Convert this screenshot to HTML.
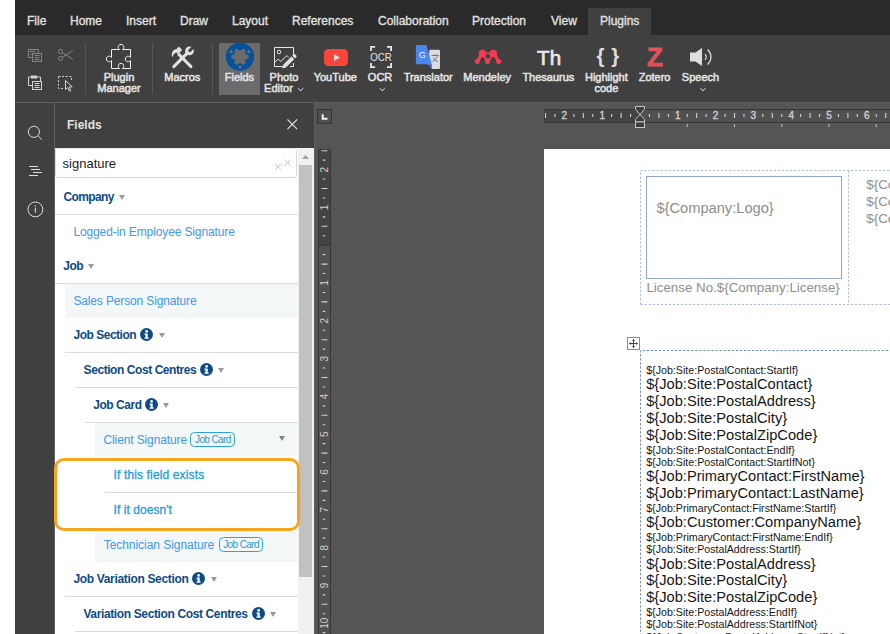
<!DOCTYPE html>
<html lang="en">
<head>
<meta charset="utf-8">
<title>Fields</title>
<style>
*{box-sizing:border-box;margin:0;padding:0}
html,body{width:890px;height:634px;overflow:hidden;background:#fff}
body{position:relative;font-family:"Liberation Sans",Arial,sans-serif;font-size:11px;color:#d9d9d9}
.abs{position:absolute}
#app{position:absolute;left:15px;top:0;width:875px;height:634px;background:#404040;overflow:hidden}
/* tab bar */
#tabs{position:absolute;left:0;top:0;width:875px;height:35px;background:#2a2a2a}
.tab{position:absolute;top:8px;height:27px;line-height:27px;font-size:12px;color:#e0e0e0;white-space:nowrap;-webkit-text-stroke:.35px #e0e0e0}
.tab.on{background:#404040;padding:0 12px}
/* toolbar */
#tb{position:absolute;left:0;top:35px;width:875px;height:67px;background:#404040}
#tbline{position:absolute;left:0;top:102px;width:875px;height:1px;background:#5e5e5e}
.sep{position:absolute;top:8px;width:1px;height:51px;background:#555}
.big{position:absolute;top:8px;height:51px;text-align:center;font-size:11px;line-height:11px;color:#dcdcdc;white-space:nowrap}
.big .lbl{position:absolute;left:50%;transform:translateX(-50%);top:28px;text-align:center}
.big svg{position:absolute;left:50%;transform:translateX(-50%);top:0}
.pressed{background:#6b6b6b}
.lbl{position:absolute;top:37px;width:0;font-size:11px;line-height:10.5px;color:#e4e4e4;white-space:nowrap;text-align:center;-webkit-text-stroke:.5px #e4e4e4}
.lbl span{position:absolute;left:0;top:0;transform:translateX(-50%);display:block;text-align:center}
.chev{display:inline-block;width:5px;height:5px;border-right:1px solid #dcdcdc;border-bottom:1px solid #dcdcdc;transform:rotate(45deg) scale(.8);margin:0 1px 0px 2px;position:relative;top:-1px;vertical-align:baseline}

/* left */
#side{position:absolute;left:0;top:103px;width:39px;height:531px;background:#404040}
#sideline{position:absolute;left:39px;top:103px;width:1px;height:531px;background:#5e5e5e}
#phead{position:absolute;left:40px;top:103px;width:259px;height:45px;background:#404040}
#phead .t{position:absolute;left:12px;top:15px;font-weight:bold;font-size:12px;line-height:14px;color:#e3e3e3}
#panel{position:absolute;left:40px;top:148px;width:259px;height:486px;background:#fff;overflow:hidden;font-family:"Liberation Sans",Arial,sans-serif}

#panel .bg{position:absolute;width:300px;background:#f4f7f7}
#panel .ln{position:absolute;width:300px;height:1px;background:#dcdcdc}
#panel .tx{position:absolute;white-space:nowrap;font-size:12px;line-height:15px;height:15px}
#panel .g{font-weight:bold;color:#0d4a86}
#panel .f{color:#4198ee}
#panel .c{color:#1f9bdc;-webkit-text-stroke:.3px #1f9bdc}
#panel .car{position:absolute;width:0;height:0;border-left:3px solid transparent;border-right:3px solid transparent;border-top:5px solid #9a9a9a}
#panel .inf{position:absolute;width:13.200px;height:13.200px;border-radius:50%;background:#0d4a86}
#panel .inf svg{position:absolute;left:0;top:0}
#panel .bdg{position:absolute;white-space:nowrap;height:14.600px;border:1px solid #2aa3e0;border-radius:4.500px;color:#2a9bd6;font-size:10px;line-height:14.600px;padding:0 3.400px 0 3.700px;letter-spacing:-.6px}
/* editor */
#page{position:absolute;left:230px;top:46px;width:346px;height:485px;background:#fff;overflow:hidden;color:#111}
#page .gt{color:#8e8e8e;white-space:nowrap}
#page .dl{position:absolute;left:102.200px;white-space:nowrap;color:#161616}
#page .dl.s{font-size:10.670px;line-height:12.270px}
#page .dl.L{font-size:14.670px;line-height:16.870px}
#ed{position:absolute;left:299px;top:103px;width:576px;height:531px;background:#555}
</style>
</head>
<body>
<div id="app">
  <div id="tabs">
    <div class="tab" style="left:12px">File</div>
    <div class="tab" style="left:55px">Home</div>
    <div class="tab" style="left:111px">Insert</div>
    <div class="tab" style="left:165px">Draw</div>
    <div class="tab" style="left:217px">Layout</div>
    <div class="tab" style="left:277px">References</div>
    <div class="tab" style="left:363px">Collaboration</div>
    <div class="tab" style="left:457px">Protection</div>
    <div class="tab" style="left:536px">View</div>
    <div class="tab on" style="left:573px">Plugins</div>
  </div>
  <div id="tb">
    <div class="sep" style="left:70px"></div>
    <div class="sep" style="left:137px"></div>
    <div class="sep" style="left:197px"></div>
    <div class="pressed abs" style="left:204px;top:8px;width:41px;height:52px"></div>
    <svg class="abs" style="left:0;top:0" width="875" height="67" viewBox="15 35 875 67" fill="none">
      <!-- copy (disabled) -->
      <g stroke="#858585" stroke-width="1">
        <path d="M32.5 57.5h-4v-8h10v4"/><path d="M30 51.5h5M30 54h1.5"/>
        <rect x="32.5" y="53.5" width="9" height="8"/><path d="M34.5 55.5h5M34.5 57.5h5M34.5 59.5h5"/>
      </g>
      <!-- cut (disabled) -->
      <g stroke="#858585" stroke-width="1">
        <circle cx="60.5" cy="51.5" r="2"/><circle cx="60.5" cy="58.5" r="2"/>
        <path d="M62.3 52.6L73 59.5M62.3 57.4L73 50.5"/>
      </g>
      <!-- paste -->
      <g stroke="#d4d4d4" stroke-width="1">
        <path d="M32.5 85.5h-4v-8.500h3M37 77h3.500v4"/><rect x="31.500" y="76" width="5" height="2" fill="#d4d4d4"/>
        <rect x="32.500" y="81.500" width="9" height="8"/><path d="M34.500 83.500h5M34.500 85.500h5M34.500 87.500h5"/>
      </g>
      <!-- select -->
      <g stroke="#d4d4d4" stroke-width="1">
        <path d="M58.500 76.500h13v4M58.500 76.500v12h5" stroke-dasharray="2 1.600"/>
        <path d="M65.500 80.500v9l2.200-2 1.600 3.700 1.500-.7-1.600-3.600h3z" fill="#404040"/>
      </g>
      <!-- plugin manager -->
      <g stroke="#f0f0f0" stroke-width="1" fill="none">
        <path d="M111.500 49.500h8a2.800 2.800 0 1 1 3 0h8v8a2.800 2.800 0 1 0 0 3v8h-8a2.800 2.800 0 1 0 -3 0h-8v-8a2.800 2.800 0 1 1 0 -3z"/>
      </g>
      <!-- macros -->
      <g stroke="#e2e2e2" stroke-width="2.900" stroke-linecap="round" fill="none"><path d="M191 66.600L178.800 54.400M173.800 66.600L186.500 53.900"/></g>
      <path d="M178.900 46.600l3.300 3.300-4 4.200-1.700-1.700c-1.800 .4-3.200 2-4.200 4.800c-1.500-3.800 .3-7.700 4-8z" fill="#e2e2e2"/>
      <circle cx="189.500" cy="50.900" r="4.400" fill="#e2e2e2"/>
      <path d="M189.990 52.530L194.800 47.720L192.680 45.600L187.870 50.410z" fill="#404040"/>
      <path d="M186.500 53.900l-2 2" stroke="#e2e2e2" stroke-width="2.600" fill="none"/>
      <!-- fields -->
      <circle cx="240" cy="56.800" r="14.100" fill="#05519a"/>
      <path d="M248.90 56.80 L248.74 56.04 L248.25 55.34 L247.29 54.85 L246.31 54.50 L245.74 54.13 L245.37 53.70 L245.18 53.17 L245.15 52.48 L245.34 51.46 L245.39 50.38 L245.03 49.62 L244.45 49.09 L243.71 48.85 L242.87 48.92 L241.95 49.51 L241.17 50.18 L240.55 50.49 L240.00 50.60 L239.45 50.49 L238.83 50.18 L238.05 49.51 L237.13 48.92 L236.29 48.85 L235.55 49.09 L234.97 49.62 L234.61 50.38 L234.66 51.46 L234.85 52.48 L234.82 53.17 L234.63 53.70 L234.26 54.13 L233.69 54.50 L232.71 54.85 L231.75 55.34 L231.26 56.04 L231.10 56.80 L231.26 57.56 L231.75 58.26 L232.71 58.75 L233.69 59.10 L234.26 59.47 L234.63 59.90 L234.82 60.43 L234.85 61.12 L234.66 62.14 L234.61 63.22 L234.97 63.98 L235.55 64.51 L236.29 64.75 L237.13 64.68 L238.05 64.09 L238.83 63.42 L239.45 63.11 L240.00 63.00 L240.55 63.11 L241.17 63.42 L241.95 64.09 L242.87 64.68 L243.71 64.75 L244.45 64.51 L245.03 63.98 L245.39 63.22 L245.34 62.14 L245.15 61.12 L245.18 60.43 L245.37 59.90 L245.74 59.47 L246.31 59.10 L247.29 58.75 L248.25 58.26 L248.74 57.56Z" fill="#6b6b6b"/>
      <circle cx="248.92" cy="51.65" r="1.5" fill="#70767c"/><circle cx="231.08" cy="51.65" r="1.5" fill="#70767c"/><circle cx="240.00" cy="67.10" r="1.5" fill="#70767c"/>
      <!-- photo editor -->
      <g stroke="#e6e6e6" stroke-width="1" fill="none">
        <path d="M283 66.500h-8.500v-19h19v8.500M293.500 63v3.500h-3.500"/>
        <circle cx="279" cy="52" r="1.800"/>
        <path d="M274.500 62.600l3.600-3.600 2.700 2.500 6-6 2 2"/>
      </g>
      <path d="M282.300 68.400l.9-3.600 8.300-8.300 2.700 2.700-8.300 8.300zM292.300 55.700l1.300-1.300a1.200 1.200 0 0 1 1.700 0l1 1a1.200 1.200 0 0 1 0 1.700l-1.300 1.300z" fill="#e0e0e0"/>
      <!-- youtube -->
      <rect x="324" y="49" width="24" height="17" rx="4.500" fill="#f9453a"/>
      <path d="M334 54.200v6.800l6.100-3.400z" fill="#d6dde0"/>
      <!-- ocr -->
      <g stroke="#e6e6e6" stroke-width="1.800" fill="none">
        <path d="M371 51v-4.100h4.100M387 46.900h4.100v4.100M391.100 63v4.100h-4.100M375.100 67.100h-4.100v-4.100"/>
      </g>
      <text x="381" y="60.600" text-anchor="middle" font-family="Liberation Sans, Arial, sans-serif" font-size="10" fill="#e6e6e6" textLength="21.500" lengthAdjust="spacingAndGlyphs">OCR</text>
      <!-- translator -->
      <path d="M429.500 49.700h9.300a1.200 1.200 0 0 1 1.200 1.200v16.900a1.200 1.200 0 0 1 -1.200 1.200h-6.800l-4-4.700z" fill="#dcdcdc"/>
      <path d="M427.900 64.300h3.900l-.3 4.700z" fill="#3b5bbd"/>
      <path d="M417.100 45.100h9.400l5.300 19.200h-14.700a1.200 1.200 0 0 1 -1.200-1.200v-16.800a1.200 1.200 0 0 1 1.200-1.200z" fill="#4a86ee"/>
      <text x="422.300" y="58" text-anchor="middle" font-family="Liberation Sans, Arial, sans-serif" font-size="9" fill="#f2f5fb">G</text>
      <g stroke="#55778f" stroke-width=".9" fill="none"><path d="M431.500 55.500h7.500M435.200 54v1.500M437.500 55.500c-.6 2.600-2.400 4.700-5 6M433 57.500c1 2 2.500 3.300 5 4.200"/></g>
      <!-- mendeley -->
      <g fill="#f33d4f">
        <circle cx="477.300" cy="61.300" r="2.600"/><circle cx="487.600" cy="61.300" r="2.600"/><circle cx="498.700" cy="61.300" r="2.600"/>
        <circle cx="482.500" cy="53.600" r="3.800"/><circle cx="493.300" cy="53.600" r="3.800"/>
        <circle cx="487.800" cy="56.400" r="3.900"/>
        <g stroke="#f33d4f" stroke-width="3.2" stroke-linecap="round" fill="none"><path d="M477.500 61l4.500-7M498.500 61l-4.500-7M487.700 61v-4"/></g>
      </g>
      <circle cx="487.800" cy="56.200" r="2.300" fill="#404040"/>
      <!-- speech -->
      <path d="M690 52.500h5.500l6.500-4.500v18l-6.500-4.500h-5.500z" fill="#dedede"/>
      <g stroke="#dedede" stroke-width="1.300" fill="none"><path d="M705 54.200a4 4 0 0 1 0 5.600"/><path d="M707.500 49.500a10 10 0 0 1 0 15"/></g>
    </svg>
    <div class="abs ticon" style="left:522px;top:10.500px;font-size:20.500px;line-height:23px;width:24px;letter-spacing:.3px;color:#e8e8e8;-webkit-text-stroke:.7px #e8e8e8">Th</div>
    <div class="abs ticon" style="left:581.500px;top:9px;font-size:20.500px;line-height:23px;font-weight:bold;color:#dcdcdc;word-spacing:1px">{ }</div>
    <div class="abs ticon" style="left:632px;top:7px;font-size:26px;line-height:30px;font-weight:bold;color:#e3525c;-webkit-text-stroke:.8px #e3525c">Z</div>
    <div class="lbl" style="left:104.0px"><span>Plugin<br>Manager</span></div>
    <div class="lbl" style="left:167.3px"><span>Macros</span></div>
    <div class="lbl" style="left:224.4px"><span>Fields</span></div>
    <div class="lbl" style="left:269.0px"><span>Photo<br>Editor <i class="chev"></i></span></div>
    <div class="lbl" style="left:320.3px"><span>YouTube</span></div>
    <div class="lbl" style="left:365.1px"><span>OCR<br><i class="chev" style="margin-left:5px"></i></span></div>
    <div class="lbl" style="left:413.2px"><span>Translator</span></div>
    <div class="lbl" style="left:472.2px"><span>Mendeley</span></div>
    <div class="lbl" style="left:533.4px"><span>Thesaurus</span></div>
    <div class="lbl" style="left:591.4px"><span>Highlight<br>code</span></div>
    <div class="lbl" style="left:639.6px"><span>Zotero</span></div>
    <div class="lbl" style="left:685.5px"><span>Speech<br><i class="chev" style="margin-left:5px"></i></span></div>
  </div>
  <div id="tbline"></div>
  <div id="side">
    <svg class="abs" style="left:0;top:0" width="39" height="531" viewBox="15 103 39 531" fill="none" stroke="#dcdcdc" stroke-width="1">
      <circle cx="33.900" cy="131.800" r="5.600"/><path d="M38 135.800l4 4"/>
      <path d="M29 166.500h9M31 169.500h9M33 172.500h9M29 175.500h9"/>
      <circle cx="35.400" cy="209.400" r="7.400"/><path d="M35.400 207.800v4.800" stroke-width="1.100"/><circle cx="35.400" cy="206" r=".7" fill="#dcdcdc" stroke="none"/>
    </svg>
  </div>
  <div id="sideline"></div>
  <div id="phead"><div class="t">Fields</div><svg class="abs" style="left:231px;top:15px" width="13" height="13" viewBox="0 0 13 13" stroke="#e2e2e2" stroke-width="1.100" fill="none"><path d="M1.500 1.500l9.600 9.600M11.100 1.500l-9.600 9.600"/></svg></div>
  <div id="panel">
    <div class="abs" style="left:0;top:0;width:242px;height:30px;border:1px solid #d9d9d9;border-top-color:#e8e8e8;border-radius:3px;background:#fff"></div>
    <div class="abs" style="left:7.600px;top:7px;font-size:13px;line-height:18px;color:#1c1c1c">signature</div>
    <svg class="abs" style="left:218px;top:8px" width="22" height="16" viewBox="273 156 22 16" stroke="#b9c3d3" stroke-width="1" fill="none"><path d="M275 163.700l6 6M281 163.700l-6 6M284.600 159.500l6 6M290.600 159.500l-6 6"/></svg>
    <div class="abs" style="left:243px;top:0;width:16px;height:486px;background:#f1f1f1;z-index:2"></div>
    <div class="abs" style="left:244.300px;top:17px;width:12.700px;height:412px;background:#c1c1c1;z-index:3"></div>
    <svg class="abs" style="left:243px;top:0;z-index:3" width="15" height="17" viewBox="0 0 15 17"><path d="M4 11l3.500-4 3.500 4z" fill="#a3a3a3"/></svg>
    <!--ROWS-->
    <div class="ln" style="left:0px;top:66px"></div>
    <span class="tx g" style="left:8.5px;top:42px;letter-spacing:-0.641px">Company</span>
    <i class="car" style="left:64.1px;top:47.2px"></i>
    <span class="tx f" style="left:18.4px;top:77px;letter-spacing:-0.124px">Logged-in Employee Signature</span>
    <div class="ln" style="left:0px;top:135px"></div>
    <span class="tx g" style="left:8.2px;top:111px;letter-spacing:-0.448px">Job</span>
    <i class="car" style="left:33.0px;top:116.2px"></i>
    <div class="bg" style="left:10px;top:136px;height:33.5px"></div>
    <span class="tx f" style="left:18.4px;top:146px;letter-spacing:-0.135px">Sales Person Signature</span>
    <div class="ln" style="left:10px;top:204px"></div>
    <span class="tx g" style="left:18.6px;top:180px;letter-spacing:-0.501px">Job Section</span>
    <i class="inf" style="left:85.2px;top:179.9px"><svg width="13.2" height="13.2" viewBox="0 0 13.2 13.2"><circle cx="6.6" cy="3.400" r="1.350" fill="#fff"/><path d="M4.600 5.500h3.100v3.900h1v1.400h-4.200v-1.400h1v-2.500h-.9z" fill="#fff"/></svg></i>
    <i class="car" style="left:103.7px;top:185.2px"></i>
    <div class="ln" style="left:20px;top:239px"></div>
    <span class="tx g" style="left:28.6px;top:215px;letter-spacing:-0.433px">Section Cost Centres</span>
    <i class="inf" style="left:145.3px;top:214.9px"><svg width="13.2" height="13.2" viewBox="0 0 13.2 13.2"><circle cx="6.6" cy="3.400" r="1.350" fill="#fff"/><path d="M4.600 5.500h3.100v3.900h1v1.400h-4.200v-1.400h1v-2.500h-.9z" fill="#fff"/></svg></i>
    <i class="car" style="left:163.3px;top:220.2px"></i>
    <div class="ln" style="left:30px;top:274px"></div>
    <span class="tx g" style="left:38.3px;top:250px;letter-spacing:-0.477px">Job Card</span>
    <i class="inf" style="left:90.1px;top:249.9px"><svg width="13.2" height="13.2" viewBox="0 0 13.2 13.2"><circle cx="6.6" cy="3.400" r="1.350" fill="#fff"/><path d="M4.600 5.500h3.100v3.900h1v1.400h-4.200v-1.400h1v-2.500h-.9z" fill="#fff"/></svg></i>
    <i class="car" style="left:108.1px;top:255.2px"></i>
    <div class="bg" style="left:40px;top:275px;height:33px"></div>
    <span class="tx f" style="left:48.5px;top:285px;letter-spacing:-0.118px">Client Signature</span>
    <span class="bdg" style="left:135.3px;top:284.4px">Job Card</span>
    <i class="car" style="left:223.8px;top:290.2px;top:288.4px;border-top-color:#858585"></i>
    <div class="ln" style="left:50px;top:344px"></div>
    <span class="tx c" style="left:58.5px;top:320px;letter-spacing:0.138px">If this field exists</span>
    <span class="tx c" style="left:58.5px;top:355px;letter-spacing:0.065px">If it doesn't</span>
    <div class="bg" style="left:40px;top:380px;height:33.5px"></div>
    <span class="tx f" style="left:48.7px;top:390px;letter-spacing:-0.045px">Technician Signature</span>
    <span class="bdg" style="left:163.5px;top:389.4px">Job Card</span>
    <div class="ln" style="left:10px;top:448px"></div>
    <span class="tx g" style="left:18.4px;top:424px;letter-spacing:-0.335px">Job Variation Section</span>
    <i class="inf" style="left:137.2px;top:423.9px"><svg width="13.2" height="13.2" viewBox="0 0 13.2 13.2"><circle cx="6.6" cy="3.400" r="1.350" fill="#fff"/><path d="M4.600 5.500h3.100v3.900h1v1.400h-4.200v-1.400h1v-2.500h-.9z" fill="#fff"/></svg></i>
    <i class="car" style="left:155.6px;top:429.2px"></i>
    <div class="ln" style="left:20px;top:483px"></div>
    <span class="tx g" style="left:28.4px;top:459px;letter-spacing:-0.37px">Variation Section Cost Centres</span>
    <i class="inf" style="left:196.7px;top:458.9px"><svg width="13.2" height="13.2" viewBox="0 0 13.2 13.2"><circle cx="6.6" cy="3.400" r="1.350" fill="#fff"/><path d="M4.600 5.500h3.100v3.900h1v1.400h-4.200v-1.400h1v-2.500h-.9z" fill="#fff"/></svg></i>
    <i class="car" style="left:214.8px;top:464.2px"></i>
    <!--/ROWS-->
  </div>
  <div class="abs" style="left:38.800px;top:458px;width:246.300px;height:73px;border:3px solid #f5a51c;border-radius:10px;z-index:5"></div>
  <div id="ed">
    <svg class="abs" style="left:0;top:0" width="576" height="531" viewBox="314 103 576 531" font-family="Liberation Sans, Arial, sans-serif">
    <rect x="314" y="103" width="1" height="531" fill="#5e5e5e"/>
    <rect x="317.500" y="109.500" width="14" height="14" fill="#4e4e4e" stroke="#353535"/>
    <path d="M322.700 114.300v4.400h4.800" stroke="#f2f2f2" stroke-width="2" fill="none"/>
    <rect x="544.500" y="109.500" width="360" height="13" fill="#515151" stroke="#363636"/>
    <rect x="545" y="110" width="95" height="12" fill="#444"/>
    <text x="564.40" y="119.200" text-anchor="middle" font-size="10" fill="#d0d0d0" stroke="#d0d0d0" stroke-width=".35">2</text>
    <text x="602.20" y="119.200" text-anchor="middle" font-size="10" fill="#d0d0d0" stroke="#d0d0d0" stroke-width=".35">1</text>
    <text x="677.80" y="119.200" text-anchor="middle" font-size="10" fill="#d0d0d0" stroke="#d0d0d0" stroke-width=".35">1</text>
    <text x="715.60" y="119.200" text-anchor="middle" font-size="10" fill="#d0d0d0" stroke="#d0d0d0" stroke-width=".35">2</text>
    <text x="753.40" y="119.200" text-anchor="middle" font-size="10" fill="#d0d0d0" stroke="#d0d0d0" stroke-width=".35">3</text>
    <text x="791.20" y="119.200" text-anchor="middle" font-size="10" fill="#d0d0d0" stroke="#d0d0d0" stroke-width=".35">4</text>
    <text x="829.00" y="119.200" text-anchor="middle" font-size="10" fill="#d0d0d0" stroke="#d0d0d0" stroke-width=".35">5</text>
    <text x="866.80" y="119.200" text-anchor="middle" font-size="10" fill="#d0d0d0" stroke="#d0d0d0" stroke-width=".35">6</text>
    <path d="M545.50 113v5M554.95 114v3M573.85 114v3M583.30 113v5M592.75 114v3M611.65 114v3M621.10 113v5M630.55 114v3M649.45 114v3M658.90 113v5M668.35 114v3M687.25 114v3M696.70 113v5M706.15 114v3M725.05 114v3M734.50 113v5M743.95 114v3M762.85 114v3M772.30 113v5M781.75 114v3M800.65 114v3M810.10 113v5M819.55 114v3M838.45 114v3M847.90 113v5M857.35 114v3M876.25 114v3M885.70 113v5" stroke="#d2d2d2" stroke-width="1.100"/>
    <path d="M687.25 124v3M734.50 124v3M781.75 124v3M829.00 124v3M876.25 124v3" stroke="#c4c4c4" stroke-width="1"/>
    <path d="M635.500 106.500h9v2.500l-4.500 5.600l-4.500-5.600z" fill="#3c3c3c" stroke="#c6c6c6"/>
    <path d="M635.500 122v-2.600l4.500-4.800l4.500 4.800v2.600z" fill="#3c3c3c" stroke="#c6c6c6"/>
    <rect x="635.500" y="122" width="9" height="5.500" fill="#3c3c3c" stroke="#c6c6c6"/>
    <rect x="318.500" y="149.500" width="12" height="500" fill="#515151" stroke="#363636"/>
    <rect x="319" y="150" width="11" height="95.2" fill="#444"/>
    <rect x="319" y="244.7" width="11" height="1" fill="#363636"/>
    <text transform="translate(328.300 169.60) rotate(-90)" text-anchor="middle" font-size="10" fill="#d0d0d0">2</text>
    <text transform="translate(328.300 207.40) rotate(-90)" text-anchor="middle" font-size="10" fill="#d0d0d0">1</text>
    <text transform="translate(328.300 283.00) rotate(-90)" text-anchor="middle" font-size="10" fill="#d0d0d0">1</text>
    <text transform="translate(328.300 320.80) rotate(-90)" text-anchor="middle" font-size="10" fill="#d0d0d0">2</text>
    <text transform="translate(328.300 358.60) rotate(-90)" text-anchor="middle" font-size="10" fill="#d0d0d0">3</text>
    <text transform="translate(328.300 396.40) rotate(-90)" text-anchor="middle" font-size="10" fill="#d0d0d0">4</text>
    <text transform="translate(328.300 434.20) rotate(-90)" text-anchor="middle" font-size="10" fill="#d0d0d0">5</text>
    <text transform="translate(328.300 472.00) rotate(-90)" text-anchor="middle" font-size="10" fill="#d0d0d0">6</text>
    <text transform="translate(328.300 509.80) rotate(-90)" text-anchor="middle" font-size="10" fill="#d0d0d0">7</text>
    <text transform="translate(328.300 547.60) rotate(-90)" text-anchor="middle" font-size="10" fill="#d0d0d0">8</text>
    <text transform="translate(328.300 585.40) rotate(-90)" text-anchor="middle" font-size="10" fill="#d0d0d0">9</text>
    <text transform="translate(328.300 623.20) rotate(-90)" text-anchor="middle" font-size="10" fill="#d0d0d0">10</text>
    <path d="M321.500 150.70h6M322.700 160.15h2.600M322.700 179.05h2.600M321.500 188.50h6M322.700 197.95h2.600M322.700 216.85h2.600M321.500 226.30h6M322.700 235.75h2.600M322.700 254.65h2.600M321.500 264.10h6M322.700 273.55h2.600M322.700 292.45h2.600M321.500 301.90h6M322.700 311.35h2.600M322.700 330.25h2.600M321.500 339.70h6M322.700 349.15h2.600M322.700 368.05h2.600M321.500 377.50h6M322.700 386.95h2.600M322.700 405.85h2.600M321.500 415.30h6M322.700 424.75h2.600M322.700 443.65h2.600M321.500 453.10h6M322.700 462.55h2.600M322.700 481.45h2.600M321.500 490.90h6M322.700 500.35h2.600M322.700 519.25h2.600M321.500 528.70h6M322.700 538.15h2.600M322.700 557.05h2.600M321.500 566.50h6M322.700 575.95h2.600M322.700 594.85h2.600M321.500 604.30h6M322.700 613.75h2.600M322.700 632.65h2.600" stroke="#d2d2d2" stroke-width="1.100"/>
    </svg>
    <div id="page">
      <svg class="abs" style="left:0;top:0" width="346" height="485" viewBox="544 149 346 485" fill="none">
        <path d="M640.500 304.500v-134h260M640.500 304.500h260M848.500 170.500v134" stroke="#adbedb" stroke-width="1" stroke-dasharray="2.300 1.750"/>
        <rect x="646.500" y="176.500" width="195" height="102" stroke="#93a6cb" stroke-width="1"/>
        <path d="M640.500 640v-289.500h260" stroke="#6f8fba" stroke-width="1" stroke-dasharray="2.300 1.750"/>
        <rect x="627.500" y="337.500" width="12" height="12" fill="#fff" stroke="#8c8c8c"/>
        <path d="M633.500 339.500v8M629.500 343.500h8" stroke="#444" stroke-width="1"/>
        <path d="M632 341l1.500-2 1.500 2zM632 346l1.500 2 1.500-2zM631 342l-2 1.500 2 1.500zM636 342l2 1.500-2 1.500z" fill="#444"/>
      </svg>
      <div class="abs gt" style="left:112.400px;top:51.400px;font-size:14.670px;line-height:17px">${Company:Logo}</div>
      <div class="abs gt" style="left:102.400px;top:131px;font-size:13.330px;line-height:15.300px">License No.${Company:License}</div>
      <div class="abs gt" style="left:322.300px;top:27.600px;font-size:13.330px;line-height:15.330px">${Company:Name}</div>
      <div class="abs gt" style="left:322.300px;top:44.700px;font-size:13.330px;line-height:15.330px">${Company:Address}</div>
      <div class="abs gt" style="left:322.300px;top:61.800px;font-size:13.330px;line-height:15.330px">${Company:City}</div>
      <div class="dl s" style="top:214.80px">${Job:Site:PostalContact:StartIf}</div>
      <div class="dl L" style="top:227.07px">${Job:Site:PostalContact}</div>
      <div class="dl L" style="top:243.94px">${Job:Site:PostalAddress}</div>
      <div class="dl L" style="top:260.81px">${Job:Site:PostalCity}</div>
      <div class="dl L" style="top:277.68px">${Job:Site:PostalZipCode}</div>
      <div class="dl s" style="top:294.55px">${Job:Site:PostalContact:EndIf}</div>
      <div class="dl s" style="top:306.82px">${Job:Site:PostalContact:StartIfNot}</div>
      <div class="dl L" style="top:319.09px">${Job:PrimaryContact:FirstName}</div>
      <div class="dl L" style="top:335.96px">${Job:PrimaryContact:LastName}</div>
      <div class="dl s" style="top:352.83px">${Job:PrimaryContact:FirstName:StartIf}</div>
      <div class="dl L" style="top:365.10px">${Job:Customer:CompanyName}</div>
      <div class="dl s" style="top:381.97px">${Job:PrimaryContact:FirstName:EndIf}</div>
      <div class="dl s" style="top:394.24px">${Job:Site:PostalAddress:StartIf}</div>
      <div class="dl L" style="top:406.51px">${Job:Site:PostalAddress}</div>
      <div class="dl L" style="top:423.38px">${Job:Site:PostalCity}</div>
      <div class="dl L" style="top:440.25px">${Job:Site:PostalZipCode}</div>
      <div class="dl s" style="top:457.12px">${Job:Site:PostalAddress:EndIf}</div>
      <div class="dl s" style="top:469.39px">${Job:Site:PostalAddress:StartIfNot}</div>
      <div class="dl s" style="top:481.66px">${Job:Customer:PostalAddress:StartIfNot}</div>
    </div>
  </div>
</div>
</body>
</html>
